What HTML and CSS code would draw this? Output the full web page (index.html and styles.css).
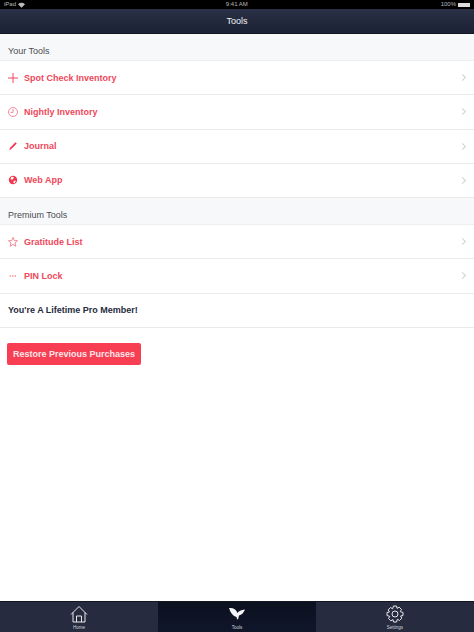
FILE: index.html
```html
<!DOCTYPE html>
<html lang="en">

<head>
  <meta charset="UTF-8">
  <meta name="viewport" content="width=device-width, initial-scale=1.0">
  <title>Tools</title>
  <link rel="stylesheet" href="styles.css">
</head>

<body>
  <div class="app">
    <div class="status">
      <div class="status-left">
        <span>iPad</span>
        <svg class="wifi" width="7" height="6" viewBox="0 0 8 6"><path d="M0 2 Q4 -1 8 2 L4 6 Z" fill="#bbb"/></svg>
      </div>
      <div class="status-time">9:41 AM</div>
      <div class="status-right">
        <span>100%</span>
        <span class="battery"></span>
      </div>
    </div>
    <div class="navbar">Tools</div>

    <div class="main">
      <div class="section-head first">Your Tools</div>
      <div class="row">
        <svg class="icon" viewBox="0 0 12 12"><path d="M6 0V12M0 6H12" stroke="#f0475b" stroke-width="1.200" fill="none"/></svg>
        <span class="label">Spot Check Inventory</span>
        <span class="chev"></span>
      </div>
      <div class="row">
        <svg class="icon" viewBox="0 0 12 12"><circle cx="6" cy="6" r="5.400" stroke="#f3808e" stroke-width="1.100" fill="none"/><path d="M6 2.500V6.500H3" stroke="#f3808e" stroke-width="1.100" fill="none"/></svg>
        <span class="label">Nightly Inventory</span>
        <span class="chev"></span>
      </div>
      <div class="row">
        <svg class="icon" viewBox="0 0 12 12"><path d="M1.500 11 L2.500 8 L9 1.500 L10.500 3 L4 9.500 Z" fill="#f0374d"/></svg>
        <span class="label">Journal</span>
        <span class="chev"></span>
      </div>
      <div class="row">
        <svg class="icon" viewBox="0 0 12 12"><circle cx="6" cy="6" r="5" fill="#f0374d"/><path d="M4 2 L7 2.500 L6 5.500 L3 5 Z M7 7 L9.500 7 L8 10 L6.500 9.500 Z" fill="#fff"/></svg>
        <span class="label">Web App</span>
        <span class="chev"></span>
      </div>
      <div class="section-head second">Premium Tools</div>
      <div class="row">
        <svg class="icon" viewBox="0 0 12 12"><path d="M6 0.500 L7.500 4.300 L11.500 4.500 L8.400 7.100 L9.500 11.200 L6 8.900 L2.500 11.200 L3.600 7.100 L0.500 4.500 L4.500 4.300 Z" stroke="#f3808e" stroke-width="1.100" fill="none"/></svg>
        <span class="label">Gratitude List</span>
        <span class="chev"></span>
      </div>
      <div class="row">
        <svg class="icon" viewBox="0 0 12 12"><path d="M2 6H3.500M5 6H6.500M8 6H9.500" stroke="#f0475b" stroke-width="1.400" fill="none"/></svg>
        <span class="label">PIN Lock</span>
        <span class="chev"></span>
      </div>
      <div class="row member">You're A Lifetime Pro Member!</div>
      <button class="restore">Restore Previous Purchases</button>
    </div>

    <div class="tabbar">
      <div class="tab">
        <svg width="18" height="18" viewBox="0 0 18 18"><path d="M1 9.500 L9 1.500 L17 9.500 M3 7.500 V17 H15 V7.500 M6.500 17 V11 H11.500 V17" stroke="#e8e9ec" stroke-width="1" fill="none"/></svg>
        <span>Home</span>
      </div>
      <div class="tab active">
        <svg width="18" height="18" viewBox="0 0 18 18"><path d="M1 3 C5 2.500 8 4 9.500 8 C10.500 6 13 5 17 4.500 C15.500 8 13.500 10 11 10.500 L10 14.500 L9 14 L8.500 12 C5 11 2.500 8 1 3 Z" fill="#f4f5f7"/></svg>
        <span>Tools</span>
      </div>
      <div class="tab">
        <svg width="18" height="18" viewBox="0 0 18 18"><path d="M7.500 1 H10.500 L11 3.400 L13.200 2.200 L15.500 4.500 L14.200 6.600 L17 7.500 V10.500 L14.600 11 L15.800 13.200 L13.500 15.500 L11.400 14.200 L10.500 17 H7.500 L7 14.600 L4.800 15.800 L2.500 13.500 L3.800 11.400 L1 10.500 V7.500 L3.400 7 L2.200 4.800 L4.500 2.500 L6.600 3.800 Z" stroke="#e8e9ec" stroke-width="1" fill="none" stroke-linejoin="round"/><circle cx="9" cy="9" r="3" stroke="#e8e9ec" stroke-width="1" fill="none"/></svg>
        <span>Settings</span>
      </div>
    </div>
  </div>
</body>

</html>
```

FILE: styles.css
```css
* {
  margin: 0;
  padding: 0;
  box-sizing: border-box;
}

body {
  font-family: "Liberation Sans", Arial, sans-serif;
  background: #fff;
}

.app {
  width: 474px;
  height: 632px;
  display: flex;
  flex-direction: column;
  overflow: hidden;
}

.status {
  height: 9px;
  background: #000;
  color: #b9b9b9;
  font-size: 6px;
  line-height: 9px;
  display: flex;
  align-items: center;
  justify-content: space-between;
  padding: 0 4px;
}

.status-left,
.status-right {
  display: flex;
  align-items: center;
  gap: 2px;
}

.status-time {
  flex: 1;
  text-align: center;
  padding-left: 8px;
}

.battery {
  width: 12px;
  height: 4px;
  background: #ddd;
}

.navbar {
  height: 25px;
  background: linear-gradient(#2a3045, #1c2235);
  border-bottom: 1px solid #14161f;
  color: #f2f3f5;
  font-size: 9px;
  line-height: 24px;
  text-align: center;
}

.main {
  flex: 1;
}

.section-head {
  height: 27px;
  padding: 11px 8px 0;
  background: #f7f8fa;
  border-bottom: 1px solid #eceef0;
  color: #4a4c52;
  font-size: 9px;
  line-height: 12px;
}

.section-head.second {
  padding-top: 11px;
}

.row {
  height: 34.250px;
  display: flex;
  align-items: center;
  padding: 0 7.500px;
  background: #fff;
  border-bottom: 1px solid #e9eaec;
}

.icon {
  width: 10px;
  height: 10px;
  margin-right: 6.500px;
  flex-shrink: 0;
}

.label {
  flex: 1;
  color: #f0475b;
  font-size: 9px;
  font-weight: bold;
}

.chev {
  width: 5px;
  height: 5px;
  border-top: 1px solid #cfd1d4;
  border-right: 1px solid #cfd1d4;
  transform: rotate(45deg);
  margin-right: 1.500px;
}

.member {
  color: #262b3d;
  font-size: 9px;
  font-weight: bold;
  padding-left: 8px;
}

.restore {
  display: block;
  margin: 15px 0 0 7px;
  width: 134px;
  height: 22px;
  background: #f73e53;
  border: none;
  border-radius: 2px;
  color: #fde6e9;
  font-family: inherit;
  font-size: 9px;
  font-weight: bold;
}

.tabbar {
  height: 31px;
  display: flex;
  background: #262b3f;
  border-top: 1px solid #14161f;
}

.tab {
  flex: 1;
  display: flex;
  flex-direction: column;
  align-items: center;
  padding-top: 3px;
  color: #d5d7dc;
  font-size: 4.500px;
}

.tab svg {
  margin-bottom: 2px;
}

.tab.active {
  background: linear-gradient(#0c1120, #10162a);
}
```
